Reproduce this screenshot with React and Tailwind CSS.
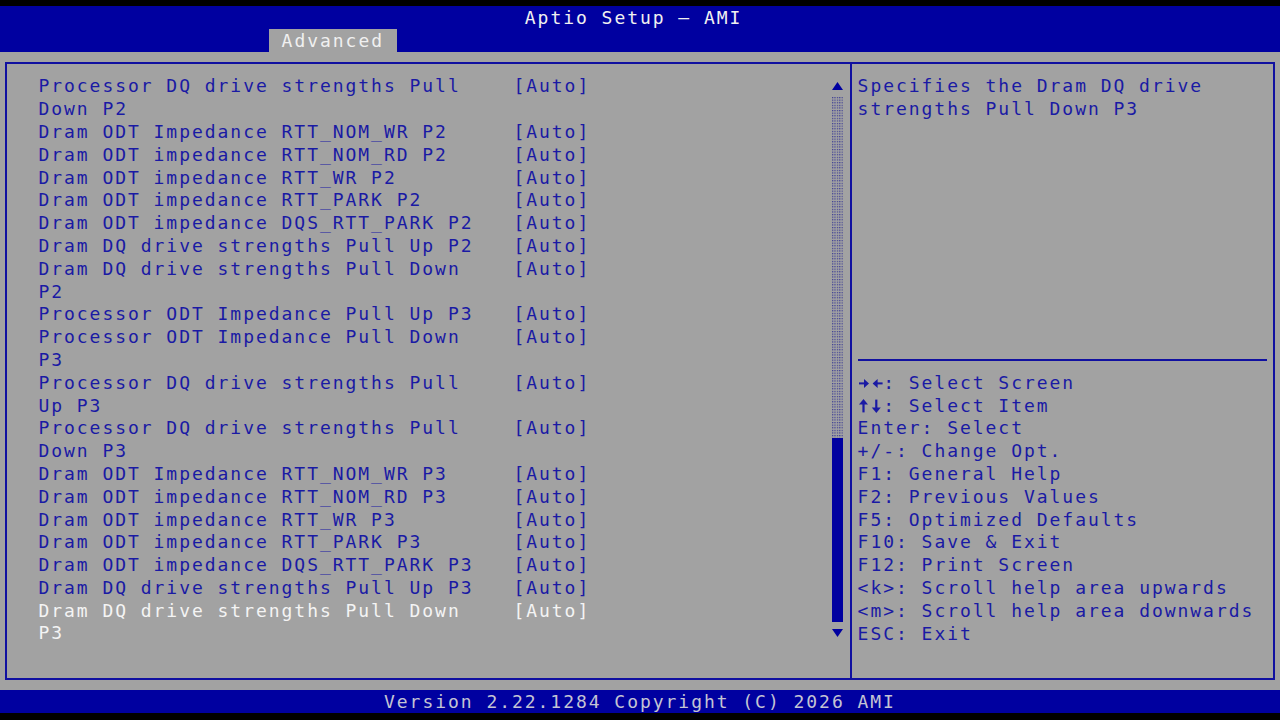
const ITEMS = [
    ['Processor DQ drive strengths Pull', 'Down P2'],
    ['Dram ODT Impedance RTT_NOM_WR P2'],
    ['Dram ODT impedance RTT_NOM_RD P2'],
    ['Dram ODT impedance RTT_WR P2'],
    ['Dram ODT impedance RTT_PARK P2'],
    ['Dram ODT impedance DQS_RTT_PARK P2'],
    ['Dram DQ drive strengths Pull Up P2'],
    ['Dram DQ drive strengths Pull Down', 'P2'],
    ['Processor ODT Impedance Pull Up P3'],
    ['Processor ODT Impedance Pull Down', 'P3'],
    ['Processor DQ drive strengths Pull', 'Up P3'],
    ['Processor DQ drive strengths Pull', 'Down P3'],
    ['Dram ODT Impedance RTT_NOM_WR P3'],
    ['Dram ODT impedance RTT_NOM_RD P3'],
    ['Dram ODT impedance RTT_WR P3'],
    ['Dram ODT impedance RTT_PARK P3'],
    ['Dram ODT impedance DQS_RTT_PARK P3'],
    ['Dram DQ drive strengths Pull Up P3'],
    ['Dram DQ drive strengths Pull Down', 'P3'],
];

const KEYS = [
    ['lr', ': Select Screen'],
    ['ud', ': Select Item'],
    ['Enter', ': Select'],
    ['+/-', ': Change Opt.'],
    ['F1', ': General Help'],
    ['F2', ': Previous Values'],
    ['F5', ': Optimized Defaults'],
    ['F10', ': Save & Exit'],
    ['F12', ': Print Screen'],
    ['<k>', ': Scroll help area upwards'],
    ['<m>', ': Scroll help area downwards'],
    ['ESC', ': Exit'],
];

const ROW = 'h-[22.8px] leading-[22.8px] whitespace-pre';

// bold arrow pairs drawn as the BIOS glyphs
function Arrows({ kind }) {
    const c = '#1a1aa4';
    return (
        <svg width="25.6" height="22.8" viewBox="0 0 25.6 22.8" className="inline-block align-top">
            {kind === 'lr' ? (
                <g fill={c}>
                    <rect x="1" y="10.4" width="6" height="2" />
                    <path d="M6 6.9 L11 11.4 L6 15.9 Z" />
                    <rect x="18.6" y="10.4" width="6" height="2" />
                    <path d="M19.6 6.9 L14.6 11.4 L19.6 15.9 Z" />
                </g>
            ) : (
                <g fill={c}>
                    <rect x="4.4" y="8.4" width="2.2" height="9" />
                    <path d="M1 9.4 L5.5 4 L10 9.4 Z" />
                    <rect x="17.2" y="4.6" width="2.2" height="9" />
                    <path d="M13.8 12.6 L18.3 18 L22.8 12.6 Z" />
                </g>
            )}
        </svg>
    );
}

function Item({ lines, selected }) {
    const color = selected ? 'text-[#f4f4f4]' : 'text-[#1a1aa4]';
    return (
        <div className={`grid grid-cols-[475px_1fr] ${color}`}>
            <div>
                {lines.map((l, i) => (
                    <div key={i} className={ROW}>{l}</div>
                ))}
            </div>
            <div className={ROW}>[Auto]</div>
        </div>
    );
}

function ScrollBar() {
    return (
        <div className="w-[11px] flex flex-col">
            <div className="h-[22.8px] flex items-center justify-center">
                <svg width="11" height="8" viewBox="0 0 11 8"><path d="M5.5 0 L11 8 L0 8 Z" fill="#0000a0" /></svg>
            </div>
            <svg width="11" height="340.6" className="block">
                <defs>
                    <pattern id="dots" width="2.4" height="2.6" patternUnits="userSpaceOnUse">
                        <rect x="0" y="0" width="1.2" height="1.2" fill="#3a3a94" />
                    </pattern>
                </defs>
                <rect x="0" y="0" width="11" height="340.6" fill="url(#dots)" />
            </svg>
            <div className="h-[183.8px] bg-[#0000a0]" />
            <div className="h-[22.8px] flex items-center justify-center">
                <svg width="11" height="8" viewBox="0 0 11 8"><path d="M0 0 L11 0 L5.5 8 Z" fill="#0000a0" /></svg>
            </div>
        </div>
    );
}

export default function App() {
    return (
        <div className="w-[1280px] h-[720px] bg-black flex flex-col font-['DejaVu_Sans_Mono','Liberation_Mono',monospace] text-[18px] tracking-[1.96px] overflow-hidden">
            <div className="h-[6.2px] shrink-0" />

            {/* Header */}
            <div className="h-[45.6px] shrink-0 bg-[#0000a0]">
                <div className={`${ROW} pl-[524.8px] pt-[1px] text-[#f0f0f0]`}>Aptio Setup – AMI</div>
                <div className="h-[22.8px] pl-[268.8px] flex">
                    <div className={`${ROW} w-[128px] pl-[12.8px] pt-[1px] bg-[#a2a2a2] text-[#f0f0f0]`}>Advanced</div>
                </div>
            </div>

            {/* Body */}
            <div className="h-[638.4px] shrink-0 bg-[#a2a2a2] pt-[10.4px] px-[5.4px]">
                <div className="h-[617.6px] border-2 border-[#1010a0] flex">
                    {/* Left pane */}
                    <div className="w-[842.8px] flex pt-[11.2px] pl-[31px] pr-[7.2px]">
                        <div className="flex-1">
                            {ITEMS.map((lines, i) => (
                                <Item key={i} lines={lines} selected={i === ITEMS.length - 1} />
                            ))}
                        </div>
                        <div className="-mt-[0.8px]">
                            <ScrollBar />
                        </div>
                    </div>

                    <div className="w-[2px] bg-[#1010a0]" />

                    {/* Help pane */}
                    <div className="flex-1 pt-[11.2px] pl-[5.4px] pr-[5.4px] text-[#1a1aa4]">
                        <div className="h-[273.6px]">
                            <div className={ROW}>Specifies the Dram DQ drive</div>
                            <div className={ROW}>strengths Pull Down P3</div>
                        </div>
                        <div className="h-[22.8px] flex items-center -mt-[0.8px] mb-[0.8px]">
                            <div className="w-full h-[2px] bg-[#1010a0]" />
                        </div>
                        {KEYS.map(([k, rest], i) => (
                            <div key={i} className={ROW}>
                                {k === 'lr' || k === 'ud' ? <Arrows kind={k} /> : k}{rest}
                            </div>
                        ))}
                    </div>
                </div>
            </div>

            {/* Footer */}
            <div className={`${ROW} shrink-0 bg-[#0000a0] pl-[384px] pt-[1px] text-[#c4c4d4]`}>
                Version 2.22.1284 Copyright (C) 2026 AMI
            </div>
        </div>
    );
}
